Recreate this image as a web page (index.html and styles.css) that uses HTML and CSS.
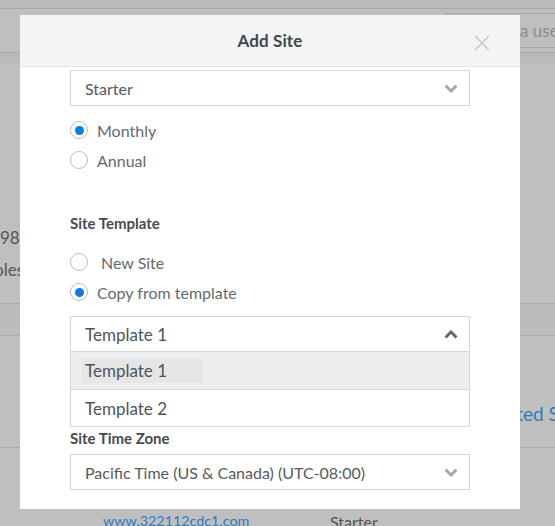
FILE: index.html
```html
<!DOCTYPE html>
<html>
<head>
<meta charset="utf-8">
<link rel="stylesheet" href="styles.css">
</head>
<body>
<div class="page">
  <div class="bar-top"></div>
  <div class="bar-search">
    <div class="search">Find a user</div>
  </div>
  <div class="band"></div>
  <div class="row-info">
    <div class="cell-num">98</div>
    <div class="cell-roles">Roles</div>
  </div>
  <div class="thead"></div>
  <div class="row-link">
    <span class="link-right">Hosted Sites</span>
  </div>
  <div class="row-site">
    <span class="site-link">www.322112cdc1.com</span>
    <span class="site-plan">Starter</span>
  </div>
</div>

<div class="modal">
  <div class="modal-header">
    <h2 class="modal-title">Add Site</h2>
    <button class="close" aria-label="Close">
      <svg width="16" height="16" viewBox="0 0 16 16"><path d="M1 1L15 15M15 1L1 15" stroke="#c4c7c9" stroke-width="1.5" fill="none"/></svg>
    </button>
  </div>
  <div class="modal-body">
    <div class="select">
      <span>Starter</span>
      <svg class="chev" width="14" height="9" viewBox="0 0 14 9"><path d="M1.5 1.5L7 7L12.5 1.5" stroke="#a6aaae" stroke-width="3" fill="none"/></svg>
    </div>
    <div class="radio-group first">
      <label class="radio"><span class="circle checked"></span><span>Monthly</span></label>
      <label class="radio"><span class="circle"></span><span>Annual</span></label>
    </div>
    <div class="field-label tpl-label">Site Template</div>
    <div class="radio-group second">
      <label class="radio"><span class="circle"></span><span class="indent">New Site</span></label>
      <label class="radio"><span class="circle checked"></span><span>Copy from template</span></label>
    </div>
    <div class="combo">
      <div class="select open">
        <span class="big">Template 1</span>
        <svg class="chev" width="14" height="9" viewBox="0 0 14 9"><path d="M1.5 7.5L7 2L12.5 7.5" stroke="#636a71" stroke-width="3" fill="none"/></svg>
      </div>
      <ul class="options">
        <li class="option active"><span class="hl">Template 1</span></li>
        <li class="option">Template 2</li>
      </ul>
    </div>
    <div class="field-label tz-label">Site Time Zone</div>
    <div class="select tz">
      <span>Pacific Time (US &amp; Canada) (UTC-08:00)</span>
      <svg class="chev" width="14" height="9" viewBox="0 0 14 9"><path d="M1.5 1.5L7 7L12.5 1.5" stroke="#a6aaae" stroke-width="3" fill="none"/></svg>
    </div>
  </div>
</div>
</body>
</html>
```

FILE: styles.css
```css
* { box-sizing: border-box; }
html, body { margin: 0; padding: 0; }
body {
  width: 555px;
  height: 526px;
  overflow: hidden;
  background: #bfbfbf;
  font-family: Lato, "Open Sans", sans-serif;
  position: relative;
}
.page { width: 555px; height: 526px; overflow: hidden; }
.bar-top { height: 9px; border-bottom: 1px solid #a9a9a9; background: #bcbcbc; }
.bar-search {
  height: 44px;
  border-bottom: 1px solid #a9a9a9;
  padding: 4px 0 0 445px;
}
.search {
  height: 35px;
  border: 1px solid #a8a8a8;
  border-right: none;
  padding: 6px 0 0 37px;
  font-size: 17px;
  color: #8c8c8c;
  white-space: nowrap;
}
.band { height: 10px; background: #bababa; }
.row-info { height: 240px; padding-top: 164px; font-size: 17px; color: #555; }
.cell-num { margin-left: 0; height: 32px; }
.cell-roles { margin-left: -16px; }
.thead { height: 33px; border-top: 1px solid #acacac; border-bottom: 1px solid #acacac; background: #bcbcbc; }
.row-link {
  height: 112px;
  border-bottom: 1px solid #acacac;
  display: flex;
  align-items: flex-end;
  padding: 0 0 22px 483px;
  white-space: nowrap;
}
.link-right { font-size: 19px; color: #2f7cc0; }
.row-site { display: flex; padding: 64px 0 0 103px; font-size: 14.3px; white-space: nowrap; }
.site-link { color: #2f7cc0; width: 227px; }
.site-plan { color: #555; font-size: 16px; }

.modal {
  position: absolute;
  left: 20px;
  top: 15px;
  width: 500px;
  height: 494px;
  background: #fff;
  overflow: hidden;
}
.modal-header {
  height: 52px;
  background: #f3f5f4;
  border-bottom: 1px solid #e4e7e7;
  display: flex;
  align-items: center;
  justify-content: center;
  position: relative;
}
.modal-title { margin: 0; font-size: 17px; font-weight: 700; color: #41474d; letter-spacing: 0.1px; }
.close {
  position: absolute;
  right: 30px;
  top: 20px;
  width: 16px; height: 16px;
  padding: 0; border: 0; background: none;
  display: block;
}
.close svg { display: block; }
.modal-body { padding: 3px 50px 0 50px; }
.select {
  height: 36px;
  border: 1px solid #d3d5d6;
  display: flex;
  align-items: center;
  justify-content: space-between;
  padding: 0 11px 0 14px;
  font-size: 16px;
  color: #555b61;
}
.select .big { font-size: 17px; color: #4f5459; }
.chev { display: block; }
.radio-group { display: flex; flex-direction: column; }
.radio-group.first { margin-top: 9px; }
.radio-group.second { margin-top: 14px; }
.radio {
  height: 30px;
  display: flex;
  align-items: center;
  gap: 9px;
  font-size: 16px;
  color: #656a6f;
}
.circle {
  width: 18px; height: 18px;
  border: 1px solid #b9bdc1;
  border-radius: 50%;
  background: #fff;
  position: relative;
  flex: none;
}
.circle.checked::after {
  content: "";
  position: absolute;
  left: 3.5px; top: 3.5px;
  width: 9px; height: 9px;
  border-radius: 50%;
  background: #0f7be3;
}
.indent { margin-left: 4px; }
.field-label { font-size: 15px; font-weight: 700; color: #454b51; line-height: 20px; }
.tpl-label { margin-top: 38px; }
.combo { margin-top: 9px; }
.options { list-style: none; margin: 0; padding: 0; border: 1px solid #d3d5d6; border-top: none; }
.option {
  height: 37px;
  border-top: 1px solid #d3d5d6;
  display: flex;
  align-items: center;
  padding-left: 14px;
  font-size: 17px;
  color: #4f5459;
}
.option:first-child { border-top: none; height: 37px; }
.option.active { background: #edeef0; padding-left: 11px; }
.hl { background: #e6e6e6; padding: 2px 36px 2px 3px; }
.tz-label { margin-top: 1px; }
.select.tz { margin-top: 6px; }
```
